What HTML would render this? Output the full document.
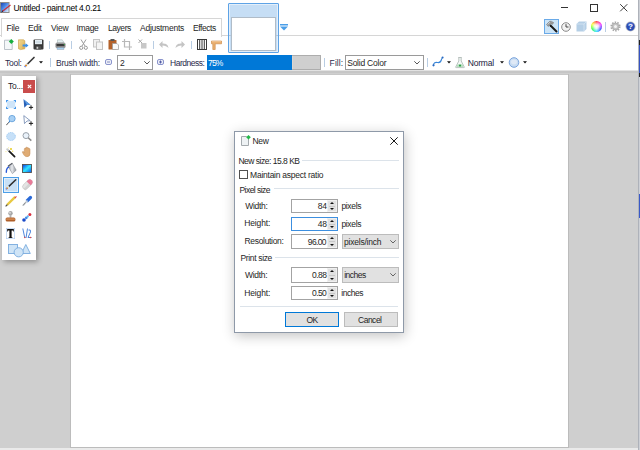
<!DOCTYPE html>
<html><head><meta charset="utf-8">
<style>
*{box-sizing:border-box;margin:0;padding:0}
html,body{width:640px;height:450px;overflow:hidden;background:#fff}
body{position:relative;font-family:"Liberation Sans",sans-serif;font-size:8.5px;letter-spacing:-0.25px;color:#1e1e1e}
.a{position:absolute}
.t{position:absolute;white-space:nowrap;line-height:1}
svg{position:absolute;overflow:visible}
.sep{position:absolute;width:1px;background:#b9cde3}
.inp{position:absolute;border:1px solid #a3a3a3;background:#fff;width:47px;height:14px}
.spin{position:absolute;right:0;top:0;width:10px;height:100%;background:#e2e2e2;border:1px solid #f0f0f0}
.spin:before{content:"";position:absolute;left:1.5px;top:1.2px;border-left:2.5px solid transparent;border-right:2.5px solid transparent;border-bottom:2.8px solid #111}
.spin:after{content:"";position:absolute;left:1.5px;bottom:1.2px;border-left:2.5px solid transparent;border-right:2.5px solid transparent;border-top:2.8px solid #111}
.spin i{position:absolute;left:1px;right:1px;top:50%;height:1px;margin-top:-0.5px;background:#c8c8c8}
.cmb{position:absolute;border:1px solid #bcbcbc;background:#e1e1e1;width:57px;height:15px}
.btn{position:absolute;border:1px solid #bcbcbc;background:#e1e1e1;width:54px;height:15px}
</style></head><body>

<!-- workspace -->
<div class="a" style="left:0;top:70px;width:640px;height:380px;background:#cfcfcf"></div>
<div class="a" style="left:0;top:70px;width:640px;height:1px;background:#e2e2e2"></div>
<div class="a" style="left:0;top:71px;width:640px;height:2px;background:#c6c6c6"></div>
<!-- canvas -->
<div class="a" style="left:70px;top:74px;width:499px;height:374px;background:#bcbcbc"></div>
<div class="a" style="left:71px;top:74px;width:497px;height:1px;background:#c8c8c8"></div>
<div class="a" style="left:71px;top:75px;width:497px;height:372px;background:#fff"></div>
<div class="a" style="left:0;top:448px;width:638px;height:2px;background:#eaeaea"></div>
<!-- right strip -->
<div class="a" style="left:638px;top:0;width:1px;height:450px;background:#aeb2ba"></div>
<div class="a" style="left:639px;top:0;width:1px;height:450px;background:#cdd0d6"></div>
<div class="a" style="left:639px;top:40px;width:1px;height:5px;background:#202020"></div>
<div class="a" style="left:639px;top:45px;width:1px;height:28px;background:#3452c4"></div>
<div class="a" style="left:639px;top:73px;width:1px;height:4px;background:#202020"></div>
<div class="a" style="left:639px;top:194px;width:1px;height:24px;background:#3a5ac8"></div>

<!-- ===== title bar ===== -->
<svg style="left:0;top:2px" width="11" height="11" viewBox="0 0 11 11">
  <defs><linearGradient id="ai" x1="0" y1="0" x2="1" y2="1"><stop offset="0" stop-color="#1a3aa8"/><stop offset="0.45" stop-color="#4a8ae8"/><stop offset="1" stop-color="#ffffff"/></linearGradient></defs>
  <rect x="0.5" y="0.5" width="8.5" height="10" fill="url(#ai)" stroke="#8c8c8c"/>
  <path d="M2.2 9.5 L10.5 3" stroke="#c83040" stroke-width="1.3"/>
  <path d="M1.5 10 L3 8.8" stroke="#1a1a1a" stroke-width="1"/>
</svg>
<div class="t" style="left:13.40px;top:4px;font-size:8.5px;color:#000;letter-spacing:-0.27px">Untitled - paint.net 4.0.21</div>
<div class="a" style="left:561px;top:7px;width:7px;height:1px;background:#333"></div>
<div class="a" style="left:590px;top:4px;width:8px;height:8px;border:1px solid #333"></div>
<svg style="left:620px;top:4px" width="8" height="8" viewBox="0 0 8 8"><path d="M0.2 0.2L7.3 7.3M7.3 0.2L0.2 7.3" stroke="#333" stroke-width="0.95"/></svg>

<!-- ===== menu tab ===== -->
<div class="a" style="left:1px;top:18px;width:221px;height:19px;border:1px solid #d6d6d6;border-bottom:none;background:#fff"></div>
<div class="a" style="left:0;top:35px;width:1px;height:1px;background:#d6d6d6"></div>
<div class="a" style="left:222px;top:35px;width:416px;height:1px;background:#d6d6d6"></div>
<div class="t" style="left:6.50px;top:24px;letter-spacing:-0.25px">File</div>
<div class="t" style="left:28.00px;top:24px;letter-spacing:-0.25px">Edit</div>
<div class="t" style="left:51.00px;top:24px;letter-spacing:-0.25px">View</div>
<div class="t" style="left:76.60px;top:24px;letter-spacing:-0.35px">Image</div>
<div class="t" style="left:108.00px;top:24px;letter-spacing:-0.45px">Layers</div>
<div class="t" style="left:140.00px;top:24px;letter-spacing:-0.25px">Adjustments</div>
<div class="t" style="left:193.00px;top:24px;letter-spacing:-0.42px">Effects</div>

<!-- thumbnail -->
<div class="a" style="left:228px;top:3px;width:51px;height:50px;border:1px solid #5ea3e6;background:#c6def5;box-shadow:inset 0 0 0 1px #e4effa;border-radius:1px"></div>
<div class="a" style="left:229px;top:35px;width:49px;height:1px;background:#b4c8dc"></div>
<div class="a" style="left:231px;top:17px;width:45px;height:34px;border:1px solid #b0bcc8;background:#fff"></div>
<svg style="left:280px;top:24px" width="8" height="7" viewBox="0 0 8 7"><rect x="0" y="0" width="8" height="1.5" fill="#4a9ee8"/><path d="M0 2.5H8L4 6.5Z" fill="#4a9ee8"/></svg>

<!-- right icons -->
<div class="a" style="left:544px;top:19px;width:15px;height:15px;border:1px solid #6aaae8;background:#cce4f7"></div>
<svg style="left:545px;top:20px" width="13" height="13" viewBox="0 0 13 13">
  <path d="M5.5 5.5 L11.5 11.5" stroke="#1a1a1a" stroke-width="2" stroke-linecap="round"/>
  <path d="M1.5 4.5 L4.8 1.2 Q6.5 0.8 8.8 2.8 L7.2 4.4 L6 3.8 L3.3 6.5Z" fill="#9a9a9a" stroke="#6a6a6a" stroke-width="0.5"/>
  <path d="M2.5 4.5 L5 2" stroke="#d8d8d8" stroke-width="0.8"/>
</svg>
<svg style="left:561px;top:22px" width="10" height="10" viewBox="0 0 10 10"><circle cx="5" cy="5" r="4.3" fill="#f2f2f2" stroke="#8a8a8a" stroke-width="1"/><path d="M5 2.2V5H7.5" stroke="#444" stroke-width="1" fill="none"/></svg>
<svg style="left:576px;top:21px" width="11" height="11" viewBox="0 0 11 11"><path d="M0.5 3 L3 0.5 H10.5 V8 L8 10.5 H0.5Z" fill="#b5cfe6"/><path d="M0.5 3H8V10.5M8 3L10.5 0.5" stroke="#e2eef8" stroke-width="0.6" fill="none"/></svg>
<div class="a" style="left:591px;top:21px;width:11px;height:11px;border-radius:50%;background:radial-gradient(circle,#fff 0,rgba(255,255,255,.85) 25%,rgba(255,255,255,0) 70%),conic-gradient(#ff3030,#ff30ff,#3040ff,#30e0ff,#30ff40,#ffff30,#ff3030)"></div>
<div class="sep" style="left:605px;top:22px;height:10px"></div>
<svg style="left:610px;top:21px" width="11" height="11" viewBox="0 0 11 11"><circle cx="5.5" cy="5.5" r="4.3" fill="none" stroke="#a8a8a8" stroke-width="1.6" stroke-dasharray="1.5 1.2"/><circle cx="5.5" cy="5.5" r="3.4" fill="#c4c4c4" stroke="#9a9a9a" stroke-width="0.6"/><circle cx="5.5" cy="5.5" r="1.5" fill="#f4f4f4"/></svg>
<svg style="left:625px;top:21px" width="11" height="11" viewBox="0 0 11 11"><circle cx="5.5" cy="5.5" r="5" fill="#b8bcc4"/><circle cx="5.5" cy="5.5" r="4.2" fill="#2a4cb4"/><ellipse cx="5.5" cy="3.6" rx="2.8" ry="1.8" fill="#4a6ad0"/></svg>
<div class="t" style="left:628px;top:23px;font-size:8px;font-weight:bold;color:#fff">?</div>

<!-- ===== toolbar row 1 ===== -->
<svg style="left:4px;top:39px" width="10" height="11" viewBox="0 0 10 11"><path d="M0.5 1.2H6.5L8.2 3V10.5H0.5Z" fill="#f4f7f9" stroke="#b4bcc4" stroke-width="0.9"/><path d="M7.3 0 L9.8 2.5 L7.3 5 L4.8 2.5Z" fill="#18b040"/></svg>
<svg style="left:18px;top:39px" width="11" height="11" viewBox="0 0 11 11"><defs><linearGradient id="fo" x1="0" y1="0" x2="1" y2="1"><stop offset="0" stop-color="#f6e2a0"/><stop offset="1" stop-color="#d8a848"/></linearGradient></defs><path d="M0.5 0.8H5.5L6.8 1.8V9.8L2.5 10.6L0.5 9.8Z" fill="url(#fo)" stroke="#c89a40" stroke-width="0.6"/><path d="M0.8 1.2L3 2.2V10.4" stroke="#e8c878" stroke-width="0.8" fill="none"/><path d="M4.6 5.6H7.6V4.2L10.5 6.5L7.6 8.8V7.4H4.6Z" fill="#3a90e8"/></svg>
<svg style="left:33px;top:39px" width="11" height="11" viewBox="0 0 11 11"><rect x="0.5" y="0.5" width="10" height="10" rx="1" fill="#383838"/><rect x="2" y="1" width="7" height="4.2" fill="#e8f0f4"/><path d="M2.6 2.4H8.4M2.6 3.6H8.4" stroke="#b8c8d4" stroke-width="0.5"/><rect x="2.8" y="7.2" width="5.4" height="3.3" fill="#505050"/><rect x="3.6" y="7.8" width="1.6" height="2" fill="#d0d0d0"/></svg>
<div class="sep" style="left:49px;top:41px;height:8px"></div>
<svg style="left:55px;top:39px" width="11" height="11" viewBox="0 0 11 11"><path d="M2.5 4V0.8H7L8.3 2V4Z" fill="#e4eef0" stroke="#a8b8b8" stroke-width="0.6"/><rect x="0.4" y="3.6" width="10.2" height="5.4" rx="1.6" fill="#9a9a9a"/><rect x="1.5" y="5" width="8" height="2.2" fill="#3a3a3a"/><rect x="8.8" y="5" width="1" height="1" fill="#40b050"/><rect x="2" y="8.6" width="7" height="1.8" fill="#a8d0f0" stroke="#7a8a9a" stroke-width="0.4"/></svg>
<div class="sep" style="left:71px;top:41px;height:8px"></div>
<svg style="left:79px;top:39px" width="9" height="11" viewBox="0 0 9 11"><path d="M2 0.5L6 7M7 0.5L3 7" stroke="#9a9a9a" stroke-width="1"/><circle cx="2.2" cy="8.8" r="1.6" fill="none" stroke="#9a9a9a"/><circle cx="6.8" cy="8.8" r="1.6" fill="none" stroke="#9a9a9a"/></svg>
<svg style="left:93px;top:39px" width="10" height="11" viewBox="0 0 10 11"><rect x="0.5" y="0.5" width="6" height="7.5" fill="#f0f0f0" stroke="#c4c4c4"/><rect x="3.5" y="3" width="6" height="7.5" fill="#f4f4f4" stroke="#c4c4c4"/></svg>
<svg style="left:108px;top:39px" width="11" height="11" viewBox="0 0 11 11"><rect x="0.5" y="1" width="8" height="9.5" rx="0.6" fill="#b4622a"/><rect x="2.5" y="0" width="4" height="2" fill="#555"/><path d="M4.5 4.5H9L10.5 6V10.5H4.5Z" fill="#fafafa" stroke="#9a9a9a" stroke-width="0.7"/></svg>
<svg style="left:122px;top:39px" width="10" height="11" viewBox="0 0 10 11"><path d="M2.5 0V8H10M0 2.5H7.5V11" stroke="#b8b8b8" stroke-width="1.2" fill="none"/></svg>
<svg style="left:138px;top:39px" width="9" height="11" viewBox="0 0 9 11"><path d="M0.5 0.5L4 4M4 0.5L0.5 4" stroke="#a8a8a8" stroke-width="1"/><rect x="3" y="4" width="5.5" height="5.5" fill="#c8c8c8"/></svg>
<div class="sep" style="left:153px;top:41px;height:8px"></div>
<svg style="left:159px;top:40px" width="10" height="9" viewBox="0 0 10 9"><path d="M9.5 8 C9 4 6 3.5 3.5 3.5 V1 L0 4.5 L3.5 8 V5.5 C6 5.5 8 6.5 9.5 8Z" fill="#c4c4c4"/></svg>
<svg style="left:175px;top:40px" width="10" height="9" viewBox="0 0 10 9"><path d="M0.5 8 C1 4 4 3.5 6.5 3.5 V1 L10 4.5 L6.5 8 V5.5 C4 5.5 2 6.5 0.5 8Z" fill="#c4c4c4"/></svg>
<div class="sep" style="left:191px;top:41px;height:8px"></div>
<svg style="left:197px;top:39px" width="10" height="11" viewBox="0 0 10 11"><rect x="0.5" y="0.5" width="9" height="10" fill="#fff" stroke="#3a3a3a"/><path d="M2.7 0.5V10.5M5 0.5V10.5M7.3 0.5V10.5" stroke="#3a3a3a" stroke-width="1"/></svg>
<svg style="left:211px;top:39px" width="11" height="11" viewBox="0 0 11 11"><path d="M0.5 2H10.5V4.8H4.2V10.5H1.8V4.8H0.5Z" fill="#eab070" stroke="#c88440" stroke-width="0.6"/><path d="M1 2.6H10" stroke="#f8d8b0" stroke-width="0.6"/></svg>

<!-- ===== toolbar row 2 ===== -->
<div class="t" style="left:5.00px;top:59px;color:#2a2a4a;letter-spacing:-0.25px">Tool:</div>
<svg style="left:24px;top:57px" width="11" height="11" viewBox="0 0 11 11"><path d="M10 0.5L3.5 7" stroke="#3a3a3a" stroke-width="1.7" stroke-linecap="round"/><path d="M3.6 6.9L2.6 7.9" stroke="#e0e0e0" stroke-width="1.6"/><path d="M2.6 7.9L1.4 9.1" stroke="#e08a20" stroke-width="1.8"/><path d="M1.4 9.1L0.6 9.9" stroke="#5a7ae0" stroke-width="1.5"/></svg>
<svg style="left:39px;top:61px" width="4" height="3" viewBox="0 0 4 3"><path d="M0 0.2H4L2 2.6Z" fill="#111"/></svg>
<div class="sep" style="left:50px;top:58px;height:9px"></div>
<div class="t" style="left:56.00px;top:59px;color:#2a2a4a;letter-spacing:-0.25px">Brush width:</div>
<svg style="left:105px;top:59px" width="7" height="6" viewBox="0 0 7 6"><rect x="0.5" y="0.5" width="6" height="5" rx="1.5" fill="#eef0f8" stroke="#8a94cc"/><path d="M2 3H5" stroke="#6a74b0" stroke-width="0.8"/></svg>
<div class="a" style="left:117px;top:55px;width:36px;height:15px;border:1px solid #9a9a9a;background:#fff"></div>
<div class="t" style="left:120px;top:59px">2</div>
<svg style="left:144px;top:61px" width="6" height="4" viewBox="0 0 6 4"><path d="M0.3 0.3L3 3L5.7 0.3" stroke="#444" fill="none" stroke-width="0.9"/></svg>
<svg style="left:157px;top:59px" width="7" height="6" viewBox="0 0 7 6"><rect x="0.5" y="0.5" width="6" height="5" rx="1.5" fill="#eef0f8" stroke="#8a94cc"/><path d="M2 3H5M3.5 1.5V4.5" stroke="#4a54a0" stroke-width="0.9"/></svg>
<div class="t" style="left:170.10px;top:59px;color:#2a2a4a;letter-spacing:-0.5px">Hardness:</div>
<div class="a" style="left:207px;top:55px;width:114px;height:15px;border:1px solid #adadad;background:#cfcfcf"></div>
<div class="a" style="left:207px;top:55px;width:85px;height:15px;background:#0078d7"></div>
<div class="a" style="left:292px;top:56px;width:1px;height:13px;background:#dcd6d0"></div>
<div class="t" style="left:208px;top:59px;color:#fff;letter-spacing:-0.8px">75%</div>
<div class="sep" style="left:324px;top:58px;height:9px"></div>
<div class="t" style="left:329.60px;top:59px;color:#2a2a4a;letter-spacing:0.09px">Fill:</div>
<div class="a" style="left:345px;top:55px;width:79px;height:15px;border:1px solid #9a9a9a;background:#fff"></div>
<div class="t" style="left:347.20px;top:59px;letter-spacing:-0.23px">Solid Color</div>
<svg style="left:414px;top:61px" width="6" height="4" viewBox="0 0 6 4"><path d="M0.3 0.3L3 3L5.7 0.3" stroke="#444" fill="none" stroke-width="0.9"/></svg>
<div class="sep" style="left:427px;top:58px;height:9px"></div>
<svg style="left:432px;top:56px" width="12" height="11" viewBox="0 0 12 11"><path d="M1.5 9.5 C1.5 6.5 3.5 6 5.5 6.5 C8 7 9 5.5 9.5 3.5 C9.8 2 10.5 1.5 11 1.5" stroke="#3a86d8" stroke-width="1.1" fill="none"/><circle cx="1.5" cy="9.3" r="1.1" fill="#2a6ac0"/><circle cx="10.6" cy="1.6" r="1" fill="#2a6ac0"/></svg>
<svg style="left:447px;top:61px" width="4" height="3" viewBox="0 0 4 3"><path d="M0 0.2H4L2 2.6Z" fill="#111"/></svg>
<svg style="left:455px;top:57px" width="10" height="11" viewBox="0 0 10 11"><path d="M3.3 0.5H6.7M3.8 0.5V4L0.6 10.2Q0.6 10.6 1.2 10.6H8.8Q9.4 10.6 9.4 10.2L6.2 4V0.5" fill="#f4f8f6" stroke="#a8b4b0" stroke-width="0.8"/><path d="M2.6 7.3H7.4L8.6 10H1.4Z" fill="#b8e0c0"/><circle cx="5" cy="8.6" r="1.1" fill="#30a048"/></svg>
<div class="t" style="left:467.80px;top:59px;color:#1a1a3a;letter-spacing:-0.21px">Normal</div>
<svg style="left:500px;top:61px" width="4" height="3" viewBox="0 0 4 3"><path d="M0 0.2H4L2 2.6Z" fill="#111"/></svg>
<svg style="left:508px;top:57px" width="12" height="11" viewBox="0 0 12 11"><circle cx="6" cy="5.5" r="4.8" fill="#c8dcf2" stroke="#7aa4dc" stroke-width="1"/><ellipse cx="6" cy="5" rx="3" ry="2.4" fill="#dfe9f6"/></svg>
<svg style="left:523px;top:61px" width="4" height="3" viewBox="0 0 4 3"><path d="M0 0.2H4L2 2.6Z" fill="#111"/></svg>

<!-- ===== tools panel ===== -->
<div class="a" style="left:2px;top:76px;width:34px;height:184px;background:#fff;box-shadow:2px 2px 5px rgba(0,0,0,.3)"></div>
<div class="t" style="left:8.00px;top:82px;color:#1a1a2a;letter-spacing:-0.25px">To...</div>
<div class="a" style="left:23px;top:80px;width:12px;height:13px;background:#c94c4c"></div>
<svg style="left:27px;top:84px" width="5" height="5" viewBox="0 0 5 5"><path d="M0.8 0.8L4.2 4.2M4.2 0.8L0.8 4.2" stroke="#fff" stroke-width="1.1"/></svg>

<!-- tool icons -->
<svg style="left:6px;top:100px" width="10" height="9" viewBox="0 0 10 9"><rect x="0.8" y="0.8" width="8.4" height="7.4" fill="#cfe5f9"/><path d="M0 0H2.2V1H1V2.2H0ZM10 0H7.8V1H9V2.2H10ZM0 9H2.2V8H1V6.8H0ZM10 9H7.8V8H9V6.8H10Z" fill="#4a9aec"/></svg>
<svg style="left:23px;top:99px" width="11" height="11" viewBox="0 0 11 11"><path d="M0.5 0.3L7.5 5.8L4 6L1.3 8.8Z" fill="#2a62b8"/><path d="M0.5 0.3L7.5 5.8L4 6Z" fill="#5a9ae0"/><path d="M8 6.3V10.5M5.9 8.4H10.1" stroke="#1a1a1a" stroke-width="1"/></svg>
<svg style="left:6px;top:115px" width="10" height="11" viewBox="0 0 10 11"><circle cx="6" cy="3.6" r="3.2" fill="#a8d0f4" stroke="#5a9ad8" stroke-width="0.8"/><path d="M3.8 6 L2 8.5 L0.3 9.8" stroke="#3a3a3a" stroke-width="0.9" fill="none"/><path d="M3.8 6 L2.8 7.5" stroke="#3a8ee8" stroke-width="1"/></svg>
<svg style="left:23px;top:115px" width="11" height="11" viewBox="0 0 11 11"><path d="M0.8 0.6L7.2 5.7L4 6L1.5 8.6Z" fill="#fff" stroke="#7088b0" stroke-width="0.8"/><path d="M8 6.3V10.5M5.9 8.4H10.1" stroke="#1a1a1a" stroke-width="1"/></svg>
<svg style="left:6px;top:132px" width="10" height="9" viewBox="0 0 10 9"><ellipse cx="5" cy="4.5" rx="4.4" ry="4" fill="#c6e0f8" stroke="#8ec0f0" stroke-width="0.8" stroke-dasharray="1.2 0.8"/></svg>
<svg style="left:22px;top:132px" width="10" height="9" viewBox="0 0 10 9"><circle cx="4" cy="3.6" r="3" fill="#eaf2fa" stroke="#9aa2aa" stroke-width="1"/><path d="M6.2 5.8L9.3 8.6" stroke="#8a8a8a" stroke-width="1.5"/></svg>

<svg style="left:5px;top:147px" width="11" height="11" viewBox="0 0 11 11"><path d="M3.6 3.6L9.6 9.6" stroke="#1a1a1a" stroke-width="1.7" stroke-linecap="round"/><path d="M1.6 1.6L3.8 3.8" stroke="#c8ccd0" stroke-width="1.8"/><circle cx="6" cy="2" r="1.1" fill="#e8d030"/><circle cx="7.6" cy="4.2" r="0.8" fill="#f0e070"/><circle cx="3.6" cy="0.8" r="0.6" fill="#f4e890"/><circle cx="1" cy="4.6" r="0.6" fill="#f4e890"/></svg>
<svg style="left:22px;top:147px" width="9" height="10" viewBox="0 0 9 10"><path d="M2.3 5V2.2Q2.3 1.2 3 1.2Q3.7 1.2 3.7 2.2V1Q3.7 0.2 4.4 0.2Q5.1 0.2 5.1 1V1.2Q5.1 0.5 5.8 0.5Q6.5 0.5 6.5 1.3V2Q6.6 1.3 7.3 1.4Q8 1.5 8 2.4V6.5Q8 9.7 5 9.7Q2.6 9.7 1.6 7.6L0.4 5.3Q0.2 4.6 0.9 4.4Q1.6 4.3 2.3 5.6Z" fill="#e0ac74" stroke="#c08850" stroke-width="0.5"/></svg>
<svg style="left:5px;top:163px" width="12" height="11" viewBox="0 0 12 11"><defs><linearGradient id="bk" x1="0" y1="0" x2="1" y2="0"><stop offset="0" stop-color="#9aa0a8"/><stop offset="0.5" stop-color="#e8eaee"/><stop offset="1" stop-color="#8a9098"/></linearGradient></defs><path d="M3 3.2L7.3 0.3L11.2 7.2L7.4 10.6Z" fill="url(#bk)" stroke="#8a8e96" stroke-width="0.6"/><path d="M3 3.2L7.3 0.3" stroke="#5a5e66" stroke-width="1.1"/><path d="M3.6 4.2 Q1.4 5 1.3 9.3" stroke="#2a5ad8" stroke-width="1.4" fill="none" stroke-linecap="round"/></svg>
<svg style="left:22px;top:164px" width="10" height="9" viewBox="0 0 10 9"><defs><linearGradient id="gr" x1="0" y1="0" x2="1" y2="1"><stop offset="0" stop-color="#0830e8"/><stop offset="0.5" stop-color="#30e8ff"/><stop offset="1" stop-color="#0850f0"/></linearGradient></defs><rect x="0.5" y="0.5" width="9" height="8" fill="url(#gr)" stroke="#505050" stroke-width="0.9"/></svg>

<div class="a" style="left:3px;top:177px;width:16px;height:16px;border:1px solid #4a9ee8;background:#c8e0f6;box-shadow:inset 0 0 0 1px #e2effb"></div>
<svg style="left:4px;top:178px" width="14" height="14" viewBox="0 0 14 14"><path d="M11.8 1.8L4.6 8.6" stroke="#2e2e2e" stroke-width="1.5" stroke-linecap="round"/><path d="M4.8 8.4L3.6 9.6" stroke="#f0f0f0" stroke-width="1.5"/><path d="M3.6 9.6L2.6 10.6" stroke="#e08a20" stroke-width="1.6"/><path d="M2.6 10.6L1.9 11.3" stroke="#4a5ae0" stroke-width="1.3"/></svg>
<svg style="left:22px;top:179px" width="11" height="11" viewBox="0 0 11 11"><g transform="rotate(-45 5.5 5.5)"><rect x="-0.3" y="2.8" width="11.6" height="5.4" rx="2.6" fill="#e4e4e4" stroke="#b8b8b8" stroke-width="0.5"/><path d="M7 2.8H8.7A2.6 2.6 0 0 1 8.7 8.2H7Z" fill="#e87a98"/><rect x="-0.3" y="5.8" width="7.3" height="2.4" fill="#c8c8c8" opacity="0.6"/></g></svg>

<svg style="left:5px;top:196px" width="12" height="11" viewBox="0 0 12 11"><path d="M10.2 0.8L2 9" stroke="#e8c840" stroke-width="2.4"/><path d="M10.2 0.8L11 1.6" stroke="#e04050" stroke-width="2.4"/><path d="M2.4 8.6L0.6 10.4" stroke="#4a4a4a" stroke-width="1.2"/></svg>
<svg style="left:22px;top:196px" width="10" height="11" viewBox="0 0 10 11"><path d="M8.5 1.5L5.5 4.5" stroke="#2a6ad8" stroke-width="3.2" stroke-linecap="round"/><path d="M5.5 4.5L1 9.5" stroke="#c8d0d8" stroke-width="1.8"/><path d="M3.5 6.5L1 9.5" stroke="#8a8a8a" stroke-width="1"/></svg>
<svg style="left:5px;top:211px" width="11" height="11" viewBox="0 0 11 11"><circle cx="5.5" cy="2.3" r="2.2" fill="#a8a8a8"/><circle cx="5" cy="1.8" r="0.9" fill="#e0e0e0"/><rect x="4.6" y="4" width="1.8" height="2.8" fill="#b4b4b4"/><rect x="0.6" y="6.4" width="9.8" height="4.2" rx="1.6" fill="#b0602a"/><rect x="1.2" y="7.6" width="8.6" height="0.9" fill="#e8a870"/></svg>
<svg style="left:22px;top:213px" width="10" height="9" viewBox="0 0 10 9"><circle cx="2" cy="7" r="1.8" fill="#1a4ac8"/><circle cx="4.3" cy="4.8" r="1.4" fill="#3a8ae8"/><circle cx="5.8" cy="3.4" r="1.1" fill="#60b0f0"/><circle cx="7.9" cy="1.6" r="1.5" fill="#d83040"/></svg>
<svg style="left:6px;top:228px" width="9" height="11" viewBox="0 0 9 11"><rect x="0.3" y="0.3" width="8.4" height="10.4" fill="none" stroke="#a8c8f0" stroke-width="0.6"/><path d="M1.2 1H7.8V3.6H7.2L6.8 2.4H5.6V9.2H6.4V10.1H2.6V9.2H3.4V2.4H2.2L1.8 3.6H1.2Z" fill="#111"/></svg>
<svg style="left:22px;top:228px" width="10" height="11" viewBox="0 0 10 11"><path d="M0.8 0.5L2.8 10M4 10L5.5 0.5M6.5 2 Q9 1 8.5 4 L6 9.5 H9.5" stroke="#3a7ad8" stroke-width="0.9" fill="none"/><circle cx="2.8" cy="9.5" r="0.8" fill="#e04848"/><circle cx="8.5" cy="9.5" r="0.8" fill="#e04848"/></svg>
<svg style="left:8px;top:244px" width="23" height="14" viewBox="0 0 23 14"><rect x="0.5" y="0.5" width="9" height="9" fill="#cfe4f6" stroke="#78aade" stroke-width="0.9"/><path d="M17.8 0.5L22.3 9.5H13.3Z" fill="#cfe4f6" stroke="#78aade" stroke-width="0.9"/><circle cx="10.7" cy="8.3" r="4.6" fill="#cfe4f6" stroke="#78aade" stroke-width="0.9"/></svg>

<!-- dialog -->
<div class="a" style="left:234px;top:131px;width:170px;height:202px;border:1px solid #8e99a8;background:#fff;box-shadow:1px 3px 12px rgba(0,0,0,.24)"></div>
<svg style="left:241px;top:135px" width="10" height="11" viewBox="0 0 10 11"><path d="M0.5 1.5H5.5L7.5 3.5V10.5H0.5Z" fill="#eef2f4" stroke="#a4aaae"/><path d="M7.5 0 L9.8 2.3 L7.5 4.6 L5.2 2.3Z" fill="#22b848"/></svg>
<div class="t" style="left:252.40px;top:137px;letter-spacing:-0.25px">New</div>
<svg style="left:390px;top:137px" width="8" height="8" viewBox="0 0 8 8"><path d="M0.3 0.3L7.7 7.7M7.7 0.3L0.3 7.7" stroke="#1a1a1a" stroke-width="1"/></svg>

<div class="t" style="left:238.40px;top:157px;letter-spacing:-0.49px">New size: 15.8 KB</div>
<div class="a" style="left:302px;top:160px;width:97px;height:1px;background:#dce3ea"></div>
<div class="a" style="left:239px;top:170px;width:9px;height:9px;border:1px solid #505050"></div>
<div class="t" style="left:250.1px;top:171px;letter-spacing:-0.25px">Maintain aspect ratio</div>

<div class="t" style="left:239.50px;top:186px;letter-spacing:-0.55px">Pixel size</div>
<div class="a" style="left:274px;top:188px;width:125px;height:1px;background:#dce3ea"></div>
<div class="t" style="left:245.20px;top:202px;letter-spacing:-0.29px">Width:</div>
<div class="t" style="left:244.20px;top:219px;letter-spacing:-0.11px">Height:</div>
<div class="t" style="left:244.50px;top:237px;letter-spacing:-0.32px">Resolution:</div>

<div class="inp" style="left:291px;top:199px"><div class="spin"><i></i></div></div>
<div class="t" style="left:317.80px;top:202px;letter-spacing:-0.20px">84</div>
<div class="t" style="left:341.40px;top:202px;letter-spacing:-0.33px">pixels</div>
<div class="inp" style="left:291px;top:217px;border-color:#3c8fe0"><div class="spin"><i></i></div></div>
<div class="t" style="left:317.80px;top:220px;letter-spacing:-0.20px">48</div>
<div class="t" style="left:341.40px;top:220px;letter-spacing:-0.33px">pixels</div>
<div class="inp" style="left:291px;top:234px;height:15px"><div class="spin"><i></i></div></div>
<div class="t" style="left:307.80px;top:238px;letter-spacing:-0.64px">96.00</div>
<div class="cmb" style="left:342px;top:234px"></div>
<div class="t" style="left:344.00px;top:238px;letter-spacing:-0.21px">pixels/inch</div>
<svg style="left:390px;top:240px" width="6" height="4" viewBox="0 0 6 4"><path d="M0.3 0.3L3 3L5.7 0.3" stroke="#555" fill="none" stroke-width="0.9"/></svg>

<div class="t" style="left:240.50px;top:254px;letter-spacing:-0.35px">Print size</div>
<div class="a" style="left:275px;top:257px;width:124px;height:1px;background:#dce3ea"></div>
<div class="t" style="left:245.00px;top:271px;letter-spacing:-0.29px">Width:</div>
<div class="t" style="left:244.20px;top:289px;letter-spacing:-0.11px">Height:</div>
<div class="inp" style="left:291px;top:267px;height:16px"><div class="spin"><i></i></div></div>
<div class="t" style="left:312.00px;top:271px;letter-spacing:-0.51px">0.88</div>
<div class="cmb" style="left:342px;top:267px;height:16px"></div>
<div class="t" style="left:344.20px;top:271px;letter-spacing:-0.49px">inches</div>
<svg style="left:390px;top:273px" width="6" height="4" viewBox="0 0 6 4"><path d="M0.3 0.3L3 3L5.7 0.3" stroke="#555" fill="none" stroke-width="0.9"/></svg>
<div class="inp" style="left:291px;top:286px"><div class="spin"><i></i></div></div>
<div class="t" style="left:312.00px;top:289px;letter-spacing:-0.58px">0.50</div>
<div class="t" style="left:341.20px;top:289px;letter-spacing:-0.45px">inches</div>

<div class="a" style="left:240px;top:306px;width:158px;height:1px;background:#dce3ea"></div>
<div class="btn" style="left:285px;top:312px;width:54px;border-color:#0078d7"></div>
<div class="t" style="left:306.60px;top:316px;letter-spacing:-0.6px">OK</div>
<div class="btn" style="left:344px;top:312px"></div>
<div class="t" style="left:358.00px;top:316px;letter-spacing:-0.49px">Cancel</div>

</body></html>
